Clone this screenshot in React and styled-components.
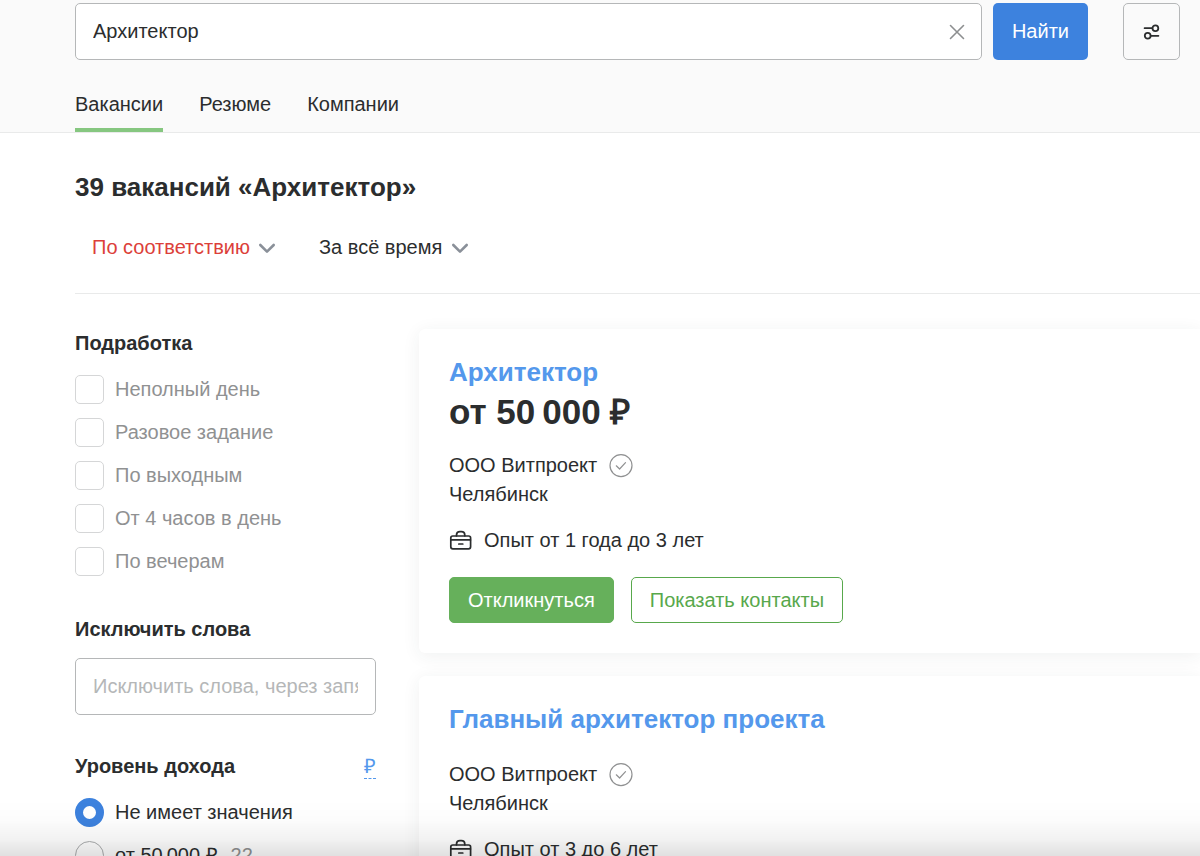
import React, { useState } from 'react'
import styled, { createGlobalStyle } from 'styled-components'

const GlobalStyle = createGlobalStyle`
  * {
    box-sizing: border-box;
  }
  body {
    margin: 0;
    background: #fff;
    color: #2b2d2e;
    font-family: "Liberation Sans", Arial, sans-serif;
    font-size: 20px;
    line-height: 29px;
  }
  button, input, select {
    font: inherit;
    color: inherit;
  }
  h1, h2, h3, p, fieldset, legend {
    margin: 0;
    padding: 0;
    border: 0;
  }
`;

const Header = styled.header`
  padding: 3px 20px 0 75px;
  background: #fafafa;
  border-bottom: 1px solid #e9eaea;
`;
const SearchForm = styled.form`
  display: flex;
`;
const SearchBox = styled.div`
  display: flex;
  flex: 1;
  align-items: center;
  height: 57px;
  padding: 0 12px 0 17px;
  background: #fff;
  border: 1px solid #b5b7b8;
  border-radius: 5px;
`;
const SearchInput = styled.input`
  flex: 1;
  min-width: 0;
  padding: 0;
  border: 0;
  outline: 0;
  background: none;
`;
const IconButton = styled.button`
  display: flex;
  align-items: center;
  justify-content: center;
  width: 24px;
  height: 24px;
  padding: 0;
  border: 0;
  background: none;
  cursor: pointer;
`;
const FindButton = styled.button`
  height: 57px;
  margin-left: 11px;
  padding: 0 19px;
  border: 0;
  border-radius: 5px;
  background: #3d82de;
  color: #fff;
  cursor: pointer;
`;
const SettingsButton = styled(IconButton)`
  width: 57px;
  height: 57px;
  margin-left: 35px;
  border: 1px solid #b5b7b8;
  border-radius: 5px;
`;
const Tabs = styled.nav`
  display: flex;
  gap: 36px;
  margin-top: 30px;
`;
const Tab = styled.a`
  padding-bottom: 9px;
  border-bottom: 4px solid ${({ $active }) => ($active ? '#86c780' : 'transparent')};
  color: inherit;
  text-decoration: none;
`;

const Main = styled.main`
  padding-left: 75px;
`;
const PageTitle = styled.h1`
  padding-top: 37px;
  font-size: 26px;
  line-height: 34px;
`;
const SortBar = styled.div`
  display: flex;
  gap: 43px;
  padding: 29px 17px 31px;
  border-bottom: 1px solid #e9eaea;
`;
const SortField = styled.label`
  display: flex;
  align-items: center;
  gap: 8px;
  color: ${({ $accent }) => ($accent ? '#dc3f3a' : 'inherit')};
`;
const SortSelect = styled.select`
  appearance: none;
  height: 29px;
  padding: 0;
  border: 0;
  outline: 0;
  background: none;
  cursor: pointer;
`;

const Content = styled.div`
  display: flex;
  align-items: flex-start;
  gap: 43px;
  padding-top: 35px;
`;
const Sidebar = styled.aside`
  flex: none;
  width: 301px;
`;
const FilterGroup = styled.fieldset`
  min-width: 0;
  margin-bottom: ${({ $tight }) => ($tight ? '37px' : '39px')};
`;
const FilterHead = styled.div`
  display: flex;
  justify-content: space-between;
  margin-bottom: ${({ $tight }) => ($tight ? '14px' : '17px')};
`;
const FilterTitle = styled.h3`
  font-size: 20px;
  line-height: 29px;
`;
const CurrencyLink = styled.a`
  height: 27px;
  border-bottom: 1px dashed #5498ec;
  color: #5498ec;
  text-decoration: none;
`;
const OptionList = styled.div`
  display: flex;
  flex-direction: column;
  gap: 14px;
`;
const Option = styled.label`
  display: flex;
  align-items: center;
  gap: 11px;
  color: ${({ $muted }) => ($muted ? '#909192' : 'inherit')};
  cursor: pointer;
`;
const Checkbox = styled.input`
  appearance: none;
  width: 29px;
  height: 29px;
  margin: 0;
  border: 1px solid #d5d6d7;
  border-radius: 5px;
  background: #fff;
  &:checked {
    border: 8px solid #3d82de;
  }
`;
const Radio = styled.input`
  appearance: none;
  width: 29px;
  height: 29px;
  margin: 0;
  border: 1px solid #aaacad;
  border-radius: 50%;
  background: #fff;
  &:checked {
    border: 8px solid #3d82de;
  }
`;
const Count = styled.span`
  margin-left: 2px;
  color: #909192;
`;
const TextInput = styled.input`
  width: 100%;
  height: 57px;
  padding: 0 17px;
  border: 1px solid #b5b7b8;
  border-radius: 5px;
  outline: 0;
  &::placeholder {
    color: #b5b7b8;
    opacity: 1;
  }
`;

const Vacancies = styled.section`
  display: flex;
  flex: 1;
  flex-direction: column;
  gap: 23px;
`;
const Card = styled.article`
  padding: 26px 30px 30px;
  border-radius: 6px 0 0 6px;
  background: #fff;
  box-shadow: 0 3px 18px rgba(43, 60, 55, 0.07);
`;
const CardTitle = styled.h2`
  font-size: 26px;
  line-height: 34px;
`;
const CardLink = styled.a`
  color: #5498ec;
  text-decoration: none;
`;
const Salary = styled.p`
  padding-top: 7px;
  font-size: 35px;
  font-weight: 700;
  line-height: 31px;
`;
const Company = styled.div`
  display: flex;
  align-items: center;
  gap: 12px;
  margin-top: 24px;
`;
const Experience = styled.div`
  display: flex;
  align-items: center;
  gap: 11px;
  margin-top: 17px;
`;
const Actions = styled.div`
  display: flex;
  gap: 17px;
  margin-top: 22px;
`;
const ActionButton = styled.button`
  height: 46px;
  padding: 0 18px;
  border: 1px solid ${({ $filled }) => ($filled ? '#66b05b' : '#58a84c')};
  border-radius: 5px;
  background: ${({ $filled }) => ($filled ? '#66b05b' : '#fff')};
  color: ${({ $filled }) => ($filled ? '#fff' : '#58a84c')};
  cursor: pointer;
`;
// fade over the lower edge of the window
const BottomShade = styled.div`
  position: fixed;
  right: 0;
  bottom: 0;
  left: 0;
  height: 56px;
  background: linear-gradient(
    rgba(0, 0, 0, 0),
    rgba(0, 0, 0, 0.01) 35%,
    rgba(0, 0, 0, 0.05) 70%,
    rgba(0, 0, 0, 0.12)
  );
  pointer-events: none;
`;

const CloseIcon = () => (
  <svg width="16" height="16" viewBox="0 0 16 16" fill="none" stroke="#8d8f90" strokeWidth="1.6" strokeLinecap="round">
    <path d="M1.5 1.5l13 13M14.5 1.5l-13 13" />
  </svg>
);
const SlidersIcon = () => (
  <svg width="18" height="18" viewBox="0 0 18 18" fill="none" stroke="#2b2d2e" strokeWidth="1.8" strokeLinecap="round">
    <path d="M1.6 5.2h7.6M7.8 12.800h7.600" />
    <circle cx="12.4" cy="5.2" r="2.9" />
    <circle cx="4.700" cy="12.800" r="2.9" />
  </svg>
);
const ChevronIcon = () => (
  <svg width="18" height="12" viewBox="0 0 18 12" fill="none" stroke="#8a9099" strokeWidth="2.6" strokeLinecap="round" strokeLinejoin="round">
    <path d="M2.3 3l6.7 6.6L15.7 3" />
  </svg>
);
const VerifiedIcon = () => (
  <svg width="24" height="24" viewBox="0 0 24 24" fill="none" stroke="#909192" strokeWidth="1.2" strokeLinecap="round" strokeLinejoin="round">
    <circle cx="12" cy="11.6" r="11" />
    <path d="M7.3 11.8l3.3 3.200 5.900-6.400" />
  </svg>
);
const BriefcaseIcon = () => (
  <svg width="24" height="24" viewBox="0 0 24 24" fill="none" stroke="#2b2d2e" strokeWidth="1.7" strokeLinecap="round" strokeLinejoin="round">
    <rect x="1.8" y="7" width="19.800" height="12.800" rx="2" />
    <path d="M7.500 6.800v-.8a3.400 3.400 0 0 1 3.400-3.300h1.500a3.400 3.400 0 0 1 3.400 3.300v.8M2 10.900h19.400M9.800 15h4" />
  </svg>
);

const partTime = ['Неполный день', 'Разовое задание', 'По выходным', 'От 4 часов в день', 'По вечерам'];
const incomes = [
  { value: 'any', name: 'Не имеет значения' },
  { value: '50000', name: 'от 50\u2009000 ₽', count: 22 },
];
const vacancies = [
  { id: 1, title: 'Архитектор', salary: 'от 50\u2009000 ₽', company: 'ООО Витпроект', city: 'Челябинск', experience: 'Опыт от 1 года до 3 лет' },
  { id: 2, title: 'Главный архитектор проекта', company: 'ООО Витпроект', city: 'Челябинск', experience: 'Опыт от 3 до 6 лет' },
];

const VacancyCard = ({ vacancy }) => (
  <Card>
    <CardTitle><CardLink href="#">{vacancy.title}</CardLink></CardTitle>
    {vacancy.salary && <Salary>{vacancy.salary}</Salary>}
    <Company>
      <span>{vacancy.company}</span>
      <VerifiedIcon />
    </Company>
    <p>{vacancy.city}</p>
    <Experience>
      <BriefcaseIcon />
      <span>{vacancy.experience}</span>
    </Experience>
    <Actions>
      <ActionButton type="button" $filled>Откликнуться</ActionButton>
      <ActionButton type="button">Показать контакты</ActionButton>
    </Actions>
  </Card>
);

const App = () => {
  const [query, setQuery] = useState('Архитектор');
  const [selected, setSelected] = useState([]);
  const [income, setIncome] = useState('any');

  const toggle = (item) =>
    setSelected((prev) => (prev.includes(item) ? prev.filter((name) => name !== item) : [...prev, item]));

  return (
    <>
      <GlobalStyle />
      <Header>
        <SearchForm onSubmit={(e) => e.preventDefault()}>
          <SearchBox>
            <SearchInput aria-label="Поиск" value={query} onChange={(e) => setQuery(e.target.value)} />
            <IconButton type="button" aria-label="Очистить" onClick={() => setQuery('')}>
              <CloseIcon />
            </IconButton>
          </SearchBox>
          <FindButton type="submit">Найти</FindButton>
          <SettingsButton type="button" aria-label="Фильтры">
            <SlidersIcon />
          </SettingsButton>
        </SearchForm>
        <Tabs>
          <Tab href="#" $active>Вакансии</Tab>
          <Tab href="#">Резюме</Tab>
          <Tab href="#">Компании</Tab>
        </Tabs>
      </Header>
      <Main>
        <PageTitle>39 вакансий «Архитектор»</PageTitle>
        <SortBar>
          <SortField $accent>
            <SortSelect aria-label="Сортировка">
              <option>По соответствию</option>
            </SortSelect>
            <ChevronIcon />
          </SortField>
          <SortField>
            <SortSelect aria-label="Период">
              <option>За всё время</option>
            </SortSelect>
            <ChevronIcon />
          </SortField>
        </SortBar>
        <Content>
          <Sidebar>
            <FilterGroup>
              <FilterHead><FilterTitle>Подработка</FilterTitle></FilterHead>
              <OptionList>
                {partTime.map((item) => (
                  <Option key={item} $muted>
                    <Checkbox type="checkbox" checked={selected.includes(item)} onChange={() => toggle(item)} />
                    {item}
                  </Option>
                ))}
              </OptionList>
            </FilterGroup>
            <FilterGroup $tight>
              <FilterHead $tight>
                <FilterTitle><label htmlFor="exclude">Исключить слова</label></FilterTitle>
              </FilterHead>
              <TextInput id="exclude" placeholder="Исключить слова, через запятую" />
            </FilterGroup>
            <FilterGroup>
              <FilterHead>
                <FilterTitle>Уровень дохода</FilterTitle>
                <CurrencyLink href="#">₽</CurrencyLink>
              </FilterHead>
              <OptionList>
                {incomes.map((item) => (
                  <Option key={item.value}>
                    <Radio
                      type="radio"
                      name="income"
                      checked={income === item.value}
                      onChange={() => setIncome(item.value)}
                    />
                    {item.name}
                    {item.count && <Count>{item.count}</Count>}
                  </Option>
                ))}
              </OptionList>
            </FilterGroup>
          </Sidebar>
          <Vacancies>
            {vacancies.map((vacancy) => (
              <VacancyCard key={vacancy.id} vacancy={vacancy} />
            ))}
          </Vacancies>
        </Content>
      </Main>
      <BottomShade />
    </>
  )
}

export default App
